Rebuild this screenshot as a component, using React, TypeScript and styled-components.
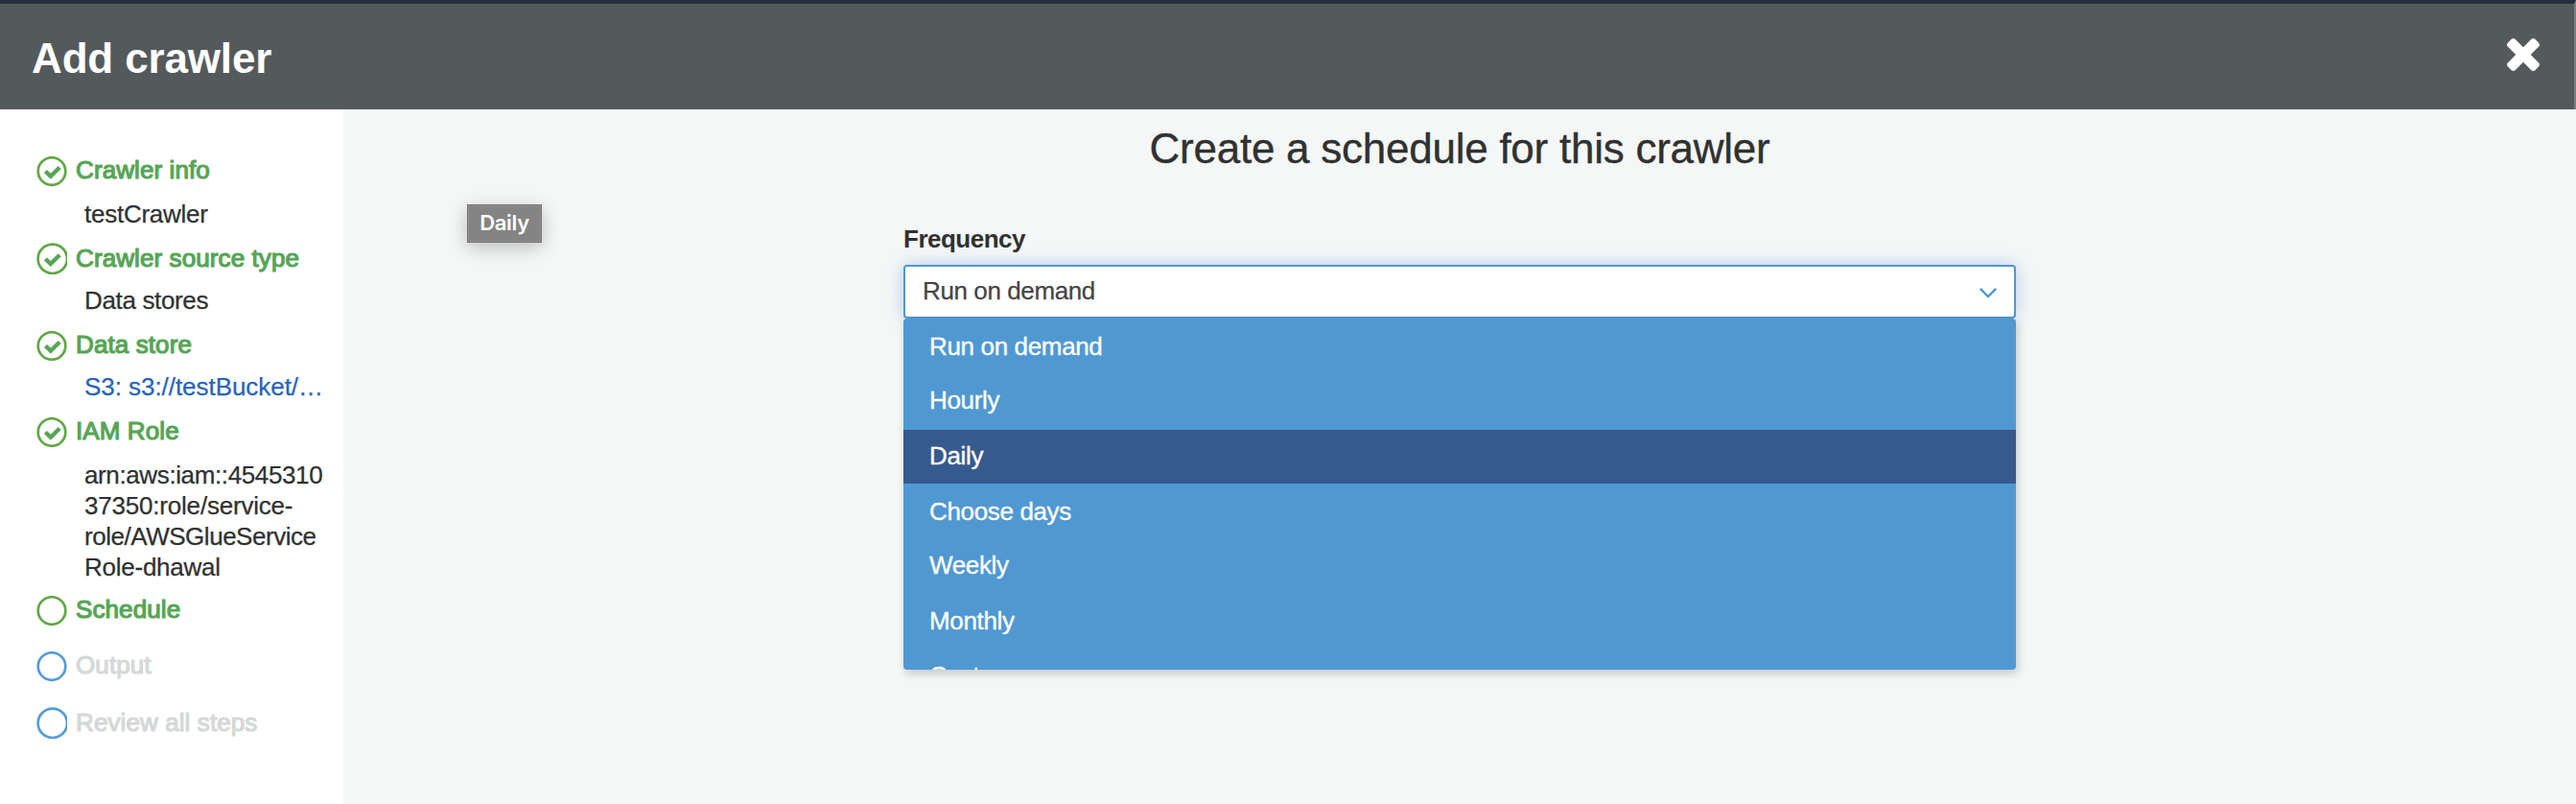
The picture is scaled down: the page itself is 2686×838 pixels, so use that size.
import React from "react";
import styled, { createGlobalStyle } from "styled-components";

const GlobalStyle = createGlobalStyle`
  * { box-sizing: border-box; }
  body {
    margin: 0;
    font-family: "Liberation Sans", Arial, Helvetica, sans-serif;
    font-size: 26px;
    line-height: 32px;
    color: #2f3131;
    background: #f4f7f6;
  }
  h1, h2, ul, ol { margin: 0; padding: 0; }
  ul, ol { list-style: none; }
`;

const Page = styled.div`
  position: relative;
  display: flex;
  flex-direction: column;
  width: 100%;
  height: 838px;
  overflow: hidden;
`;

const Header = styled.header`
  display: flex;
  align-items: center;
  justify-content: space-between;
  height: 114px;
  padding: 2px 36px 0 33px;
  background: #545a5c;
  border-top: 4px solid #25303f;
  border-right: 2px solid #7b7e7f;
  color: #fff;
`;

const Title = styled.h1`
  font-size: 44px;
  line-height: 49px;
  font-weight: 700;
  letter-spacing: -0.15px;
`;

const CloseButton = styled.button`
  display: flex;
  width: 34px;
  height: 34px;
  margin-top: -6px;
  padding: 0;
  border: 0;
  background: none;
  color: inherit;
`;

const Body = styled.div`
  display: flex;
  flex: 1;
`;

const Sidebar = styled.nav`
  width: 358px;
  flex: none;
  padding: 47px 0 0 38px;
  background: #fff;
`;

const Step = styled.li<{ $gap: number }>`
  margin-bottom: ${(p) => p.$gap}px;
`;

type Tone = "active" | "pending";

const StepTitle = styled.div<{ $tone: Tone }>`
  display: flex;
  height: 32px;
  gap: 9px;
  white-space: nowrap;
  letter-spacing: 0.1px;
  color: ${(p) => (p.$tone === "active" ? "#57a555" : "#d5d8d8")};
  -webkit-text-stroke: 1.2px currentColor;
`;

const StepIcon = styled.svg<{ $tone: Tone; $large?: boolean }>`
  flex: none;
  width: 32px;
  height: ${(p) => (p.$large ? 33 : 32)}px;
  margin-top: ${(p) => (p.$large ? 0 : 2)}px;
  fill: none;
  stroke: ${(p) => (p.$tone === "active" ? "#60a744" : "#569cd5")};
`;

const StepDetail = styled.div<{ $top: number }>`
  margin-top: ${(p) => p.$top}px;
  padding-left: 50px;
`;

const DetailLine = styled.div<{ $track: number; $link?: boolean }>`
  white-space: nowrap;
  letter-spacing: ${(p) => p.$track}px;
  color: ${(p) => (p.$link ? "#2763ba" : "inherit")};
  -webkit-text-stroke: 0.25px currentColor;
`;

const Main = styled.main`
  flex: 1;
  display: flex;
  flex-direction: column;
  align-items: center;
  padding-top: 16px;
`;

const Heading = styled.h2`
  font-size: 44px;
  line-height: 49px;
  font-weight: 400;
  letter-spacing: -0.25px;
  -webkit-text-stroke: 0.35px currentColor;
`;

const Field = styled.div`
  width: 1160px;
  margin-top: 54px;
`;

const Label = styled.div`
  font-weight: 700;
  letter-spacing: -0.5px;
  margin-bottom: 11px;
`;

const Select = styled.div`
  display: flex;
  justify-content: space-between;
  height: 56px;
  padding: 0 17px 0 18px;
  border: 2px solid #5098d2;
  border-radius: 4px;
  background: #fff;
  box-shadow: 0 0 18px rgba(70, 125, 220, 0.36);
  color: #444;
  line-height: 50px;
  letter-spacing: -0.4px;
  -webkit-text-stroke: 0.25px currentColor;
`;

const Chevron = styled.svg`
  width: 20px;
  height: 12px;
  margin-top: 21px;
  fill: none;
  stroke: #4f98d3;
  stroke-width: 2.4;
`;

const Menu = styled.ul`
  position: relative;
  height: 366px;
  padding-top: 2px;
  overflow: hidden;
  border-radius: 4px;
  background: #5098d2;
  box-shadow: 2px 4px 10px rgba(0, 0, 0, 0.2);
  color: #fff;
`;

const Option = styled.li<{ $selected: boolean; $gap: number }>`
  height: 56px;
  margin-bottom: ${(p) => p.$gap}px;
  padding-left: 27px;
  line-height: 54px;
  letter-spacing: -0.35px;
  -webkit-text-stroke: 0.35px currentColor;
  background: ${(p) => (p.$selected ? "#375a8c" : "transparent")};
`;

const Tooltip = styled.div`
  position: absolute;
  left: 487px;
  top: 213px;
  width: 78px;
  height: 40px;
  border: 1px solid #747474;
  background: #848484;
  box-shadow: inset 0 0 0 1px #909090, 0 5px 20px rgba(0, 0, 0, 0.24);
  color: #fff;
  font: 600 22px/37px Inter, sans-serif;
  letter-spacing: -0.3px;
  text-align: center;
`;

interface StepData {
  title: string;
  tone: Tone;
  done?: boolean;
  large?: boolean;
  top?: number;
  gap: number;
  link?: boolean;
  lines?: [string, number][];
}

const steps: StepData[] = [
  { title: "Crawler info", tone: "active", done: true, top: 14, gap: 14, lines: [["testCrawler", -0.25]] },
  { title: "Crawler source type", tone: "active", done: true, large: true, top: 12, gap: 14, lines: [["Data stores", -0.35]] },
  { title: "Data store", tone: "active", done: true, top: 12, gap: 14, link: true, lines: [["S3: s3://testBucket/…", -0.05]] },
  {
    title: "IAM Role",
    tone: "active",
    done: true,
    top: 14,
    gap: 12,
    lines: [
      ["arn:aws:iam::4545310", -0.38],
      ["37350:role/service-", -0.2],
      ["role/AWSGlueService", -0.47],
      ["Role-dhawal", -0.25],
    ],
  },
  { title: "Schedule", tone: "active", gap: 26 },
  { title: "Output", tone: "pending", gap: 28 },
  { title: "Review all steps", tone: "pending", large: true, gap: 0 },
];

const options = [
  { label: "Run on demand", gap: 0 },
  { label: "Hourly", gap: 2 },
  { label: "Daily", gap: 2 },
  { label: "Choose days", gap: 0 },
  { label: "Weekly", gap: 2 },
  { label: "Monthly", gap: 1 },
  { label: "Custom", gap: 0 },
];

function StatusIcon({ tone, done, large }: { tone: Tone; done?: boolean; large?: boolean }) {
  const r = large ? 15.2 : 14.3;
  const c = large ? 16.8 : 16;
  const cy = large ? 16.8 : 15.5;
  return (
    <StepIcon $tone={tone} $large={large} viewBox={`0 0 32 ${large ? 33 : 32}`}>
      <circle cx={c} cy={cy} r={r} strokeWidth="2.7" />
      {done && <path d={`M9.4 ${cy} l5.4 5.2 l9.4 -9.2`} stroke="#57a555" strokeWidth="4.4" />}
    </StepIcon>
  );
}

export default function App() {
  return (
    <Page>
      <GlobalStyle />
      <Header>
        <Title>Add crawler</Title>
        <CloseButton aria-label="Close">
          <svg width="34" height="34" viewBox="110 366 1188 1188" fill="currentColor">
            <path d="M1298 1322q0 40-28 68l-136 136q-28 28-68 28t-68-28l-294-294-294 294q-28 28-68 28t-68-28l-136-136q-28-28-28-68t28-68l294-294-294-294q-28-28-28-68t28-68l136-136q28-28 68-28t68 28l294 294 294-294q28-28 68-28t68 28l136 136q28 28 28 68t-28 68l-294 294 294 294q28 28 28 68z" />
          </svg>
        </CloseButton>
      </Header>
      <Body>
        <Sidebar>
          <ol>
            {steps.map((s) => (
              <Step key={s.title} $gap={s.gap}>
                <StepTitle $tone={s.tone}>
                  <StatusIcon tone={s.tone} done={s.done} large={s.large} />
                  <span>{s.title}</span>
                </StepTitle>
                {s.lines && (
                  <StepDetail $top={s.top ?? 0}>
                    {s.lines.map(([text, track]) => (
                      <DetailLine key={text} $track={track} $link={s.link}>
                        {text}
                      </DetailLine>
                    ))}
                  </StepDetail>
                )}
              </Step>
            ))}
          </ol>
        </Sidebar>
        <Main>
          <Heading>Create a schedule for this crawler</Heading>
          <Field>
            <Label>Frequency</Label>
            <Select>
              <span>Run on demand</span>
              <Chevron viewBox="0 0 20 12">
                <path d="M1.8 1.8 L10 10 L18.2 1.8" />
              </Chevron>
            </Select>
            <Menu>
              {options.map((o) => (
                <Option key={o.label} $selected={o.label === "Daily"} $gap={o.gap}>
                  {o.label}
                </Option>
              ))}
            </Menu>
          </Field>
        </Main>
      </Body>
      <Tooltip>Daily</Tooltip>
    </Page>
  );
}
